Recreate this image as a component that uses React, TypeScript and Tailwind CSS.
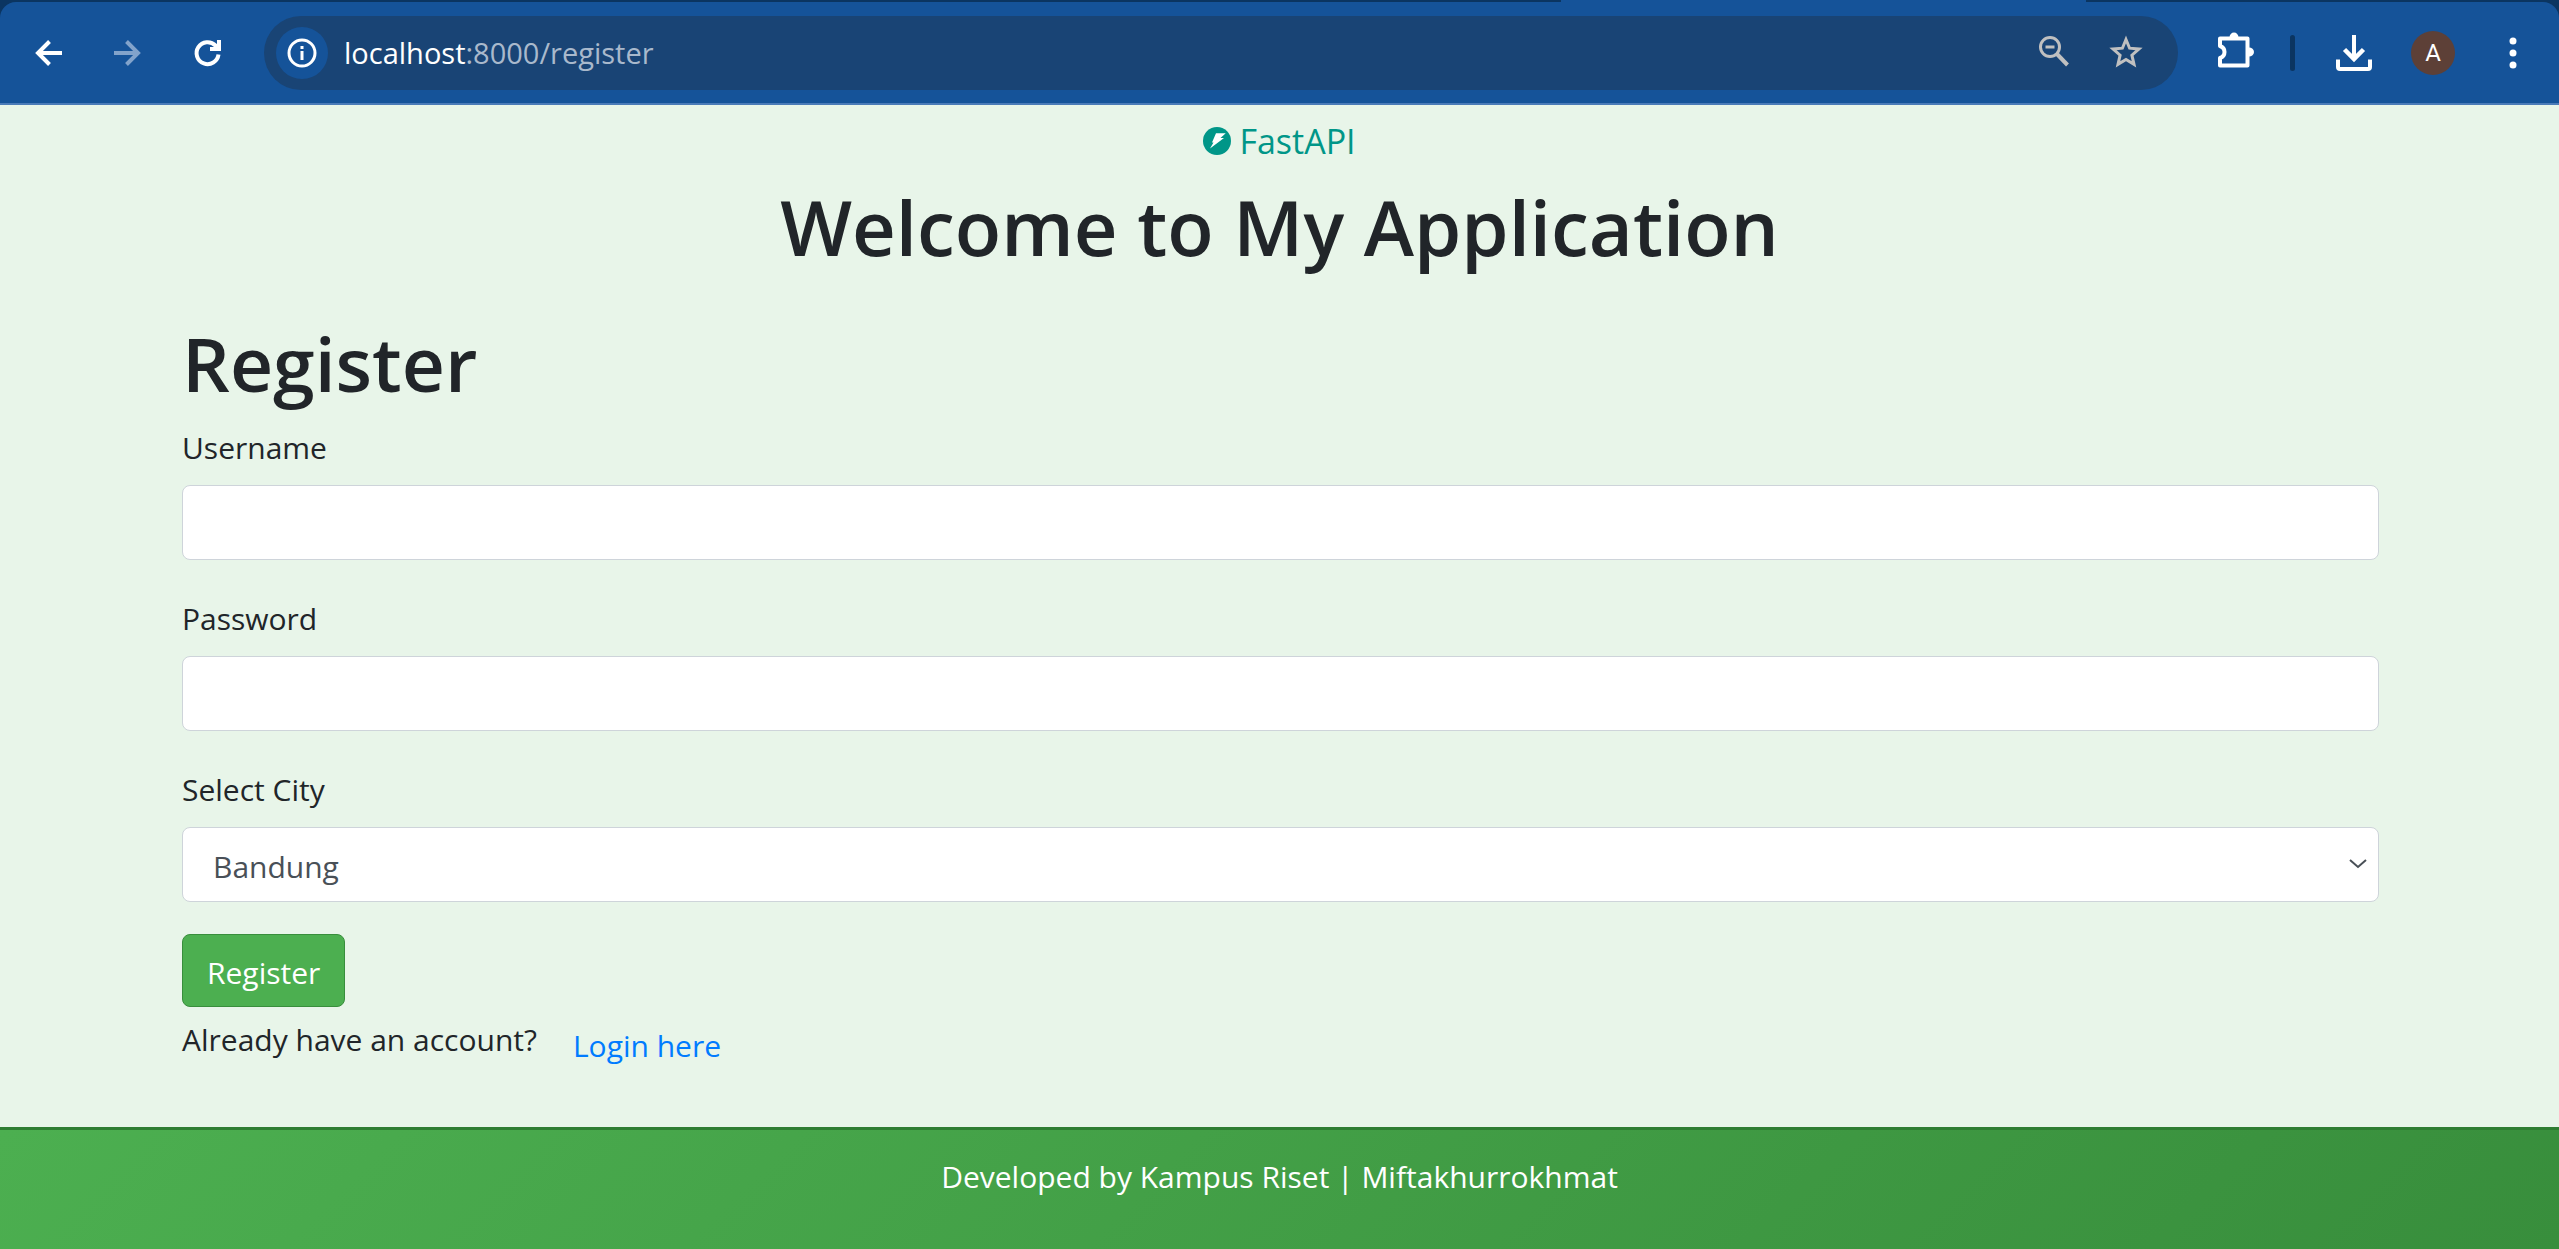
import React from "react";

const iconButton = "flex shrink-0 items-center justify-center";

function BrowserBar() {
  return (
    <header className="relative bg-[#0b3561]">
      <div className="h-0.5 pl-[61%] pr-[18.5%]">
        <div className="h-0.5 bg-[#155399]" />
      </div>
      <div className="flex h-[103px] items-center rounded-t-2xl border-b-2 border-[#4a7bb8] bg-[#155399] pl-7 pr-6 text-white">
        <nav className="flex items-center gap-10">
          <button type="button" aria-label="Back" className={iconButton}>
            <svg width="40" height="40" viewBox="0 0 40 40" fill="none" stroke="currentColor" strokeWidth="4"><path d="M34 20H10M21.500 8.500L10 20l11.500 11.500" /></svg>
          </button>
          <button type="button" aria-label="Forward" className="flex shrink-0 items-center justify-center text-[#82a3cb]">
            <svg width="40" height="40" viewBox="0 0 40 40" fill="none" stroke="currentColor" strokeWidth="4"><path d="M6 20h24M18.500 8.500L30 20 18.500 31.500" /></svg>
          </button>
          <button type="button" aria-label="Reload" className={iconButton}>
            <svg width="40" height="40" viewBox="0 0 40 40" fill="none" stroke="currentColor" strokeWidth="4"><path d="M30.500 21.500A11 11 0 1 1 27.500 12.500l2 2" /><path d="M22 16h9M31 7v11" /></svg>
          </button>
        </nav>
        <div className="ml-9 flex h-[74px] grow items-center rounded-full bg-[#194475] pl-3 pr-8">
          <button type="button" aria-label="Site information" className="flex size-13 shrink-0 items-center justify-center rounded-full bg-[#155399]">
            <svg width="30" height="30" viewBox="0 0 30 30" fill="none" stroke="currentColor" strokeWidth="3"><circle cx="15" cy="15" r="13" /><path d="M15 13v9M15 8v3" /></svg>
          </button>
          <div role="textbox" aria-label="Address" className="ml-4 grow text-[29px] leading-10">
            localhost<span className="text-[#a9b9cc]">:8000/register</span>
          </div>
          <div className="flex items-center gap-8 text-[#c0c0c0]">
            <button type="button" aria-label="Zoom out" className={iconButton}>
              <svg width="40" height="40" viewBox="0 0 40 40" fill="none" stroke="currentColor" strokeWidth="3"><circle cx="16" cy="14" r="9.500" /><path d="M11.500 14h9" /><path d="M22.500 20.500l11 11.500" strokeWidth="4" /></svg>
            </button>
            <button type="button" aria-label="Bookmark" className={iconButton}>
              <svg width="40" height="40" viewBox="0 0 40 40" fill="none" stroke="currentColor" strokeWidth="3"><path d="M20 6.500l3.600 8.700 9.400.8-7.100 6.200 2.100 9.200-8-4.900-8 4.900 2.100-9.200L7 16l9.400-.8z" /></svg>
            </button>
          </div>
        </div>
        <div className="ml-8 flex items-center">
          <button type="button" aria-label="Extensions" className={iconButton}>
            <svg width="44" height="44" viewBox="0 0 44 44" fill="none" stroke="currentColor" strokeWidth="4"><path d="M10 7.500h27.500v27H10v-7.500q4.500-1.500 4.500-6T10 15z" strokeLinejoin="round" /><path d="M19.500 6.500a4.500 5 0 0 1 9 0zM39 16.500a5 4.500 0 0 1 0 9z" fill="currentColor" stroke="none" /></svg>
          </button>
          <div className="ml-9 h-9 w-[5px] rounded-full bg-[#0b3561]" />
          <button type="button" aria-label="Downloads" className="ml-9 flex items-center justify-center">
            <svg width="44" height="44" viewBox="0 0 44 44" fill="none" stroke="currentColor" strokeWidth="4"><path d="M23 4v24" /><path d="M13.500 18.500l9.500 9.500 9.500-9.500" strokeWidth="4.500" /><path d="M7 28.500V36q0 2 2 2h28q2 0 2-2v-7.500" /></svg>
          </button>
          <button type="button" aria-label="Profile" className="ml-9 flex size-11 items-center justify-center rounded-full bg-[#5d4037] font-[Roboto] text-2xl">A</button>
          <button type="button" aria-label="Menu" className="ml-9 flex items-center justify-center">
            <svg width="44" height="44" viewBox="0 0 44 44" fill="currentColor"><circle cx="22" cy="10" r="3.500" /><circle cx="22" cy="22" r="3.500" /><circle cx="22" cy="34" r="3.500" /></svg>
          </button>
        </div>
      </div>
    </header>
  );
}

function TextField({ id, label, type }: { id: string; label: string; type: string }) {
  return (
    <div className="mb-9">
      <label htmlFor={id} className="mb-3.5 block">{label}</label>
      <input
        id={id}
        type={type}
        className="block h-[75px] w-full rounded-lg border border-[#ced4da] bg-white px-6 text-[30px] text-[#495057]"
      />
    </div>
  );
}

export default function App() {
  return (
    <div className="flex min-h-screen flex-col bg-[#e8f5e9] font-['Open_Sans','Noto_Sans',sans-serif] text-[#212529]">
      <BrowserBar />
      <main className="grow">
        <div className="flex h-[72px] items-center justify-center gap-2 text-[#009688]">
          <svg width="28" height="28" viewBox="0 0 28 28"><circle cx="14" cy="14" r="14" fill="currentColor" /><path d="M13 6.300h9.700L17.500 11h3.500L7 21.500l3.500-6H9z" fill="#fff" /></svg>
          <span className="text-[34px]">FastAPI</span>
        </div>
        <h1 className="mt-0.5 text-center text-[76px] font-semibold leading-[96px]">Welcome to My Application</h1>
        <section className="pl-[182px] pr-[180px] text-[30px] leading-[46px]">
          <h2 className="mt-10 mb-3.5 text-[75px] font-semibold leading-[96px]">Register</h2>
          <form onSubmit={(e) => e.preventDefault()}>
            <TextField id="username" label="Username" type="text" />
            <TextField id="password" label="Password" type="password" />
            <div className="mb-8">
              <label htmlFor="city" className="mb-3.5 block">Select City</label>
              <div className="relative">
                <select id="city" className="block h-[75px] w-full appearance-none rounded-lg border border-[#ced4da] bg-white px-[30px] pt-1 text-[30px] text-[#495057]">
                  <option>Bandung</option>
                </select>
                <svg className="pointer-events-none absolute top-8 right-3" width="18" height="10" viewBox="0 0 18 10" fill="none" stroke="#495057" strokeWidth="2"><path d="M1 1l8 7 8-7" /></svg>
              </div>
            </div>
            <button type="submit" className="block h-[73px] rounded-lg border border-[#388e3c] bg-[#4caf50] px-6 pt-1 text-white">Register</button>
          </form>
          <div className="mt-2.5 flex gap-9">
            <span>Already have an account?</span>
            <a href="#login" className="mt-1.5 text-[#007bff]">Login here</a>
          </div>
        </section>
      </main>
      <footer className="h-[122px] border-t-3 border-[#2e7d32] bg-linear-135 from-[#4caf50] to-[#388e3c] pt-6 text-center text-[30px] leading-[46px] text-white">
        Developed by Kampus Riset | Miftakhurrokhmat
      </footer>
    </div>
  );
}
